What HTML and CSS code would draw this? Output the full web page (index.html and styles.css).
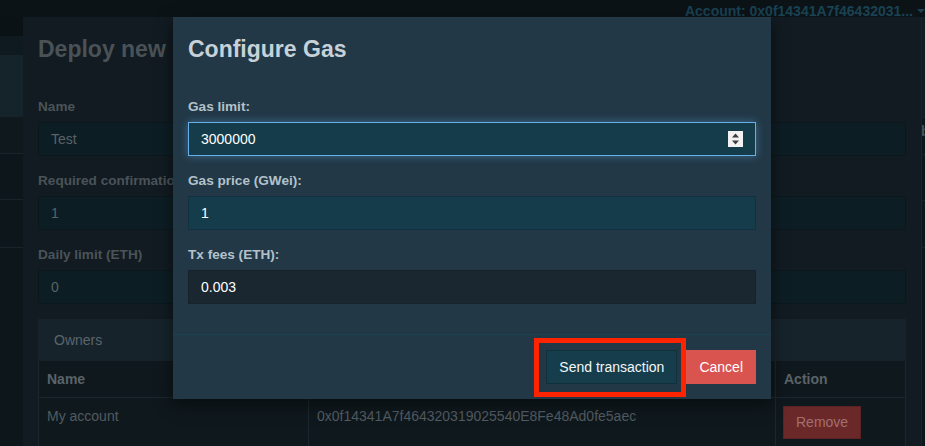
FILE: index.html
```html
<!DOCTYPE html>
<html lang="en">
<head>
<meta charset="utf-8">
<title>Configure Gas</title>
<link rel="stylesheet" href="styles.css">
</head>
<body>
<div class="topbar">
  <span class="account">Account: 0x0f14341A7f46432031...</span>
  <span class="caret"></span>
</div>
<div class="main">
  <aside class="sidebar">
    <div class="seg seg-a"></div>
    <div class="seg seg-b"></div>
    <div class="seg seg-c"></div>
    <div class="seg seg-d"></div>
    <div class="seg seg-e"></div>
    <div class="seg seg-f"></div>
  </aside>

  <section class="deploy">
    <div class="dialog-header">
      <h2 class="dialog-title dim-title">Deploy new</h2>
    </div>
    <div class="dialog-body deploy-body">
      <div class="form-group">
        <label class="label dim-label">Name</label>
        <div class="input dim-input">Test</div>
      </div>
      <div class="form-group">
        <label class="label dim-label">Required confirmations</label>
        <div class="input dim-input">1</div>
      </div>
      <div class="form-group">
        <label class="label dim-label">Daily limit (ETH)</label>
        <div class="input dim-input">0</div>
      </div>
      <div class="panel">
        <div class="panel-heading">Owners</div>
        <table class="owners">
          <thead>
            <tr><th class="col-name">Name</th><th class="col-addr">Address</th><th class="col-act">Action</th></tr>
          </thead>
          <tbody>
            <tr>
              <td>My account</td>
              <td>0x0f14341A7f464320319025540E8Fe48Ad0fe5aec</td>
              <td><span class="btn-remove">Remove</span></td>
            </tr>
          </tbody>
        </table>
      </div>
    </div>
  </section>

  <aside class="rightcol">
    <div class="rseg rseg-a"></div>
    <div class="rseg rseg-b">b</div>
    <div class="rseg rseg-c"></div>
    <div class="rseg rseg-d"></div>
  </aside>
</div>

<div class="modal">
  <div class="dialog-header">
    <h2 class="dialog-title">Configure Gas</h2>
  </div>
  <div class="dialog-body modal-body">
    <div class="form-group">
      <label class="label">Gas limit:</label>
      <div class="input gas-input focused">
        <span>3000000</span>
        <svg class="spinner" width="15" height="16" viewBox="0 0 15 16">
          <rect width="15" height="16" fill="#f2f2f2"/>
          <polygon points="7.5,2.5 11,6.5 4,6.5" fill="#3d3d3d"/>
          <polygon points="4,9.5 11,9.5 7.5,13.5" fill="#3d3d3d"/>
        </svg>
      </div>
    </div>
    <div class="form-group">
      <label class="label">Gas price (GWei):</label>
      <div class="input gas-input">1</div>
    </div>
    <div class="form-group">
      <label class="label">Tx fees (ETH):</label>
      <div class="input fee-input">0.003</div>
    </div>
  </div>
  <div class="modal-footer">
    <span class="send-wrap">
      <span class="btn btn-send">Send transaction</span>
      <span class="highlight"></span>
    </span>
    <span class="btn btn-cancel">Cancel</span>
  </div>
</div>
</body>
</html>
```
FILE: styles.css
```css
* { box-sizing: border-box; }

html, body {
  margin: 0;
  padding: 0;
}

body {
  width: 925px;
  height: 446px;
  overflow: hidden;
  position: relative;
  background: #0c1317;
  font-family: "Liberation Sans", Arial, Helvetica, sans-serif;
  font-size: 14px;
  color: #fff;
}

/* top bar */
.topbar {
  height: 17px;
  display: flex;
  justify-content: flex-end;
  align-items: flex-start;
  padding-top: 3px;
  line-height: 16px;
  font-weight: bold;
  font-size: 14px;
  color: #1a4253;
  white-space: nowrap;
}

.caret {
  width: 0;
  height: 0;
  margin: 6px 0 0 4px;
  border-left: 4px solid transparent;
  border-right: 4px solid transparent;
  border-top: 4px solid #1a4253;
}

.main {
  display: flex;
  height: 429px;
}

/* left sidebar */
.sidebar {
  width: 23px;
  display: flex;
  flex-direction: column;
  background: #0d161b;
}
.seg { border-bottom: 1px solid #18232a; }
.seg-a { height: 19px; background: #0b1216; border-bottom: none; }
.seg-b { height: 19px; background: #0f1a20; border-bottom: none; }
.seg-c { height: 62px; background: #15232b; border-bottom: none; }
.seg-d { height: 37px; background: #0e181d; }
.seg-e { height: 46px; }
.seg-f { height: 48px; }

/* right strip */
.rightcol {
  width: 4px;
  display: flex;
  flex-direction: column;
  background: #0d161b;
  border-left: 1px solid #18232a;
  overflow: hidden;
}
.rseg { border-bottom: 1px solid #18232a; }
.rseg-a { height: 101px; background: #111c23; }
.rseg-b {
  height: 37px;
  color: #4a5358;
  font-weight: bold;
  font-size: 14px;
  line-height: 26px;
  margin-left: -1px;
}
.rseg-c { height: 46px; }
.rseg-d { height: 47px; }

/* background deploy dialog */
.deploy {
  width: 898px;
  background: #111b21;
  padding: 0 15px;
}

.dialog-header {
  padding-top: 19px;
}

.dialog-title {
  margin: 0;
  font-size: 23px;
  line-height: 26px;
  font-weight: bold;
  color: #c7d2d8;
  white-space: nowrap;
}

.dim-title { color: #4a5257; }

.dialog-body {
  padding-top: 36px;
}

.form-group + .form-group {
  margin-top: 16px;
}

.label {
  display: block;
  font-weight: bold;
  font-size: 13.6px;
  line-height: 18px;
  margin-bottom: 6px;
  color: #b3c2ca;
  white-space: nowrap;
}

.dim-label { color: #4b5358; }

.input {
  height: 34px;
  display: flex;
  align-items: center;
  justify-content: space-between;
  padding: 0 12px;
  border: 1px solid transparent;
  font-size: 14px;
  color: #fff;
}

.dim-input {
  background: #0d1d24;
  border-color: #0b171c;
  color: #5a6267;
}

.panel {
  margin-top: 15px;
}

.panel-heading {
  background: #16232b;
  padding: 11px 16px;
  line-height: 20px;
  color: #5b656b;
}

.owners {
  width: 100%;
  border-collapse: collapse;
  background: #0f181d;
  color: #525b60;
}

.owners th,
.owners td {
  padding: 8px;
  line-height: 20px;
  border: 1px solid #1a272e;
  text-align: left;
  vertical-align: top;
  white-space: nowrap;
}

.owners th {
  font-weight: bold;
  color: #5a6368;
  border-top: none;
}

.col-name { width: 270px; }
.col-addr { width: 467px; }

.btn-remove {
  display: inline-block;
  padding: 6px 12px;
  line-height: 19px;
  background: #6a2828;
  border: 1px solid #5d2323;
  color: #a26f6f;
  margin: 0 0 0 -1px;
}

/* Configure gas modal */
.modal {
  position: absolute;
  left: 173px;
  top: 17px;
  width: 598px;
  background: #223847;
  box-shadow: 0 5px 15px rgba(0, 0, 0, 0.5);
}

.modal .dialog-header { padding-left: 15px; padding-right: 15px; }

.modal-body {
  padding: 36px 15px 30px;
}

.gas-input {
  background: #143c4b;
  border-color: #113140;
}

.gas-input.focused {
  border-color: #66afe9;
  box-shadow: 0 0 8px rgba(102, 175, 233, 0.45);
}

.spinner { display: block; }

.fee-input {
  background: #1a2731;
  border-color: #17232c;
}

.modal-footer {
  border-top: 1px solid #1b4252;
  padding: 15px;
  display: flex;
  justify-content: flex-end;
  gap: 9px;
}

.btn {
  display: inline-block;
  height: 34px;
  line-height: 32px;
  padding: 0 12px;
  font-size: 14px;
  border: 1px solid transparent;
  white-space: nowrap;
}

.send-wrap {
  position: relative;
  display: inline-block;
}

.btn-send {
  background: #163d4c;
  border-color: #10303c;
  color: #f2f6f7;
}

.btn-cancel {
  background: #d9534f;
  border-color: #d9534f;
  color: #fff;
}

.highlight {
  position: absolute;
  left: -12px;
  top: -12px;
  right: -9px;
  bottom: -13px;
  border: 5px solid #fe2400;
  pointer-events: none;
}
```
